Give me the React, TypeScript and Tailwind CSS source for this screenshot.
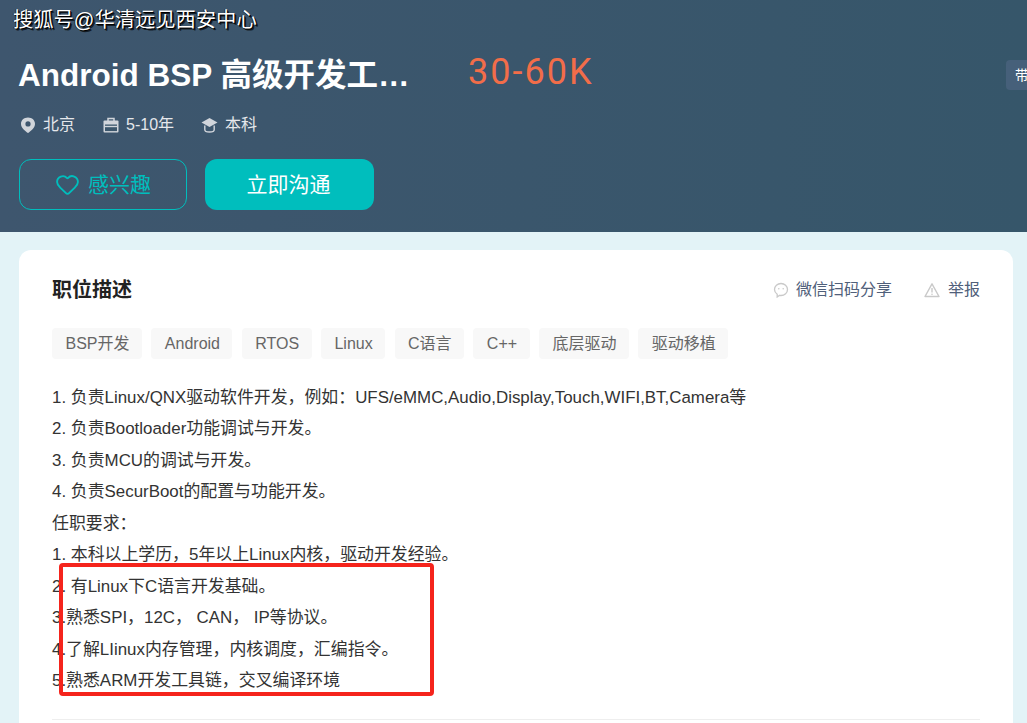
import React from 'react';
import { Heart } from 'lucide-react';

const tags = ['BSP开发', 'Android', 'RTOS', 'Linux', 'C语言', 'C++', '底层驱动', '驱动移植'];

const lines = [
  '1. 负责Linux/QNX驱动软件开发，例如：UFS/eMMC,Audio,Display,Touch,WIFI,BT,Camera等',
  '2. 负责Bootloader功能调试与开发。',
  '3. 负责MCU的调试与开发。',
  '4. 负责SecurBoot的配置与功能开发。',
  '任职要求：',
  '1. 本科以上学历，5年以上Linux内核，驱动开发经验。',
  '2. 有Linux下C语言开发基础。',
  '3.熟悉SPI，12C， CAN， IP等协议。',
  '4.了解LIinux内存管理，内核调度，汇编指令。',
  '5.熟悉ARM开发工具链，交叉编译环境',
];

const PinIcon = () => (
  <svg width="16" height="16" viewBox="0 0 16 16" fill="none">
    <path fillRule="evenodd" clipRule="evenodd" d="M8 0.500C3.900 0.500 1 3.300 1 6.900 1 10.900 5.800 14.500 8 16c2.200-1.500 7-5.100 7-9.100C15 3.300 12.100 0.500 8 0.500Zm0 9a2.600 2.600 0 1 1 0-5.200 2.600 2.600 0 0 1 0 5.200Z" fill="#d1d5db" />
  </svg>
);

const CaseIcon = () => (
  <svg width="16" height="16" viewBox="0 0 16 16" fill="none">
    <path d="M5 4V1.500h6V4" stroke="#d1d5db" strokeWidth="1.500" />
    <rect x="0.500" y="3.500" width="15" height="12" rx="1" fill="#d1d5db" />
    <rect x="2" y="7.500" width="12" height="1.300" fill="#3b566c" />
    <rect x="2" y="10.200" width="12" height="3.900" fill="#3b566c" />
  </svg>
);

const CapIcon = () => (
  <svg width="17" height="16" viewBox="0 0 17 16" fill="none">
    <path d="M8.500 1 0.500 5.500l8 4.500 8-4.500-8-4.500Z" fill="#d1d5db" />
    <path d="M3.800 8.500v4.300c0 1.300 2 2.200 4.700 2.200s4.700-.9 4.700-2.200V8.500" stroke="#d1d5db" strokeWidth="1.400" />
  </svg>
);

const ChatIcon = () => (
  <svg width="16" height="16" viewBox="0 0 16 16" fill="none">
    <path d="M8 1.500c3.600 0 6.500 2.600 6.500 6s-2.900 6-6.500 6c-.5 0-1-.1-1.400-.2L4.200 15v-2.800C2.500 11.100 1.500 9.400 1.500 7.500c0-3.400 2.900-6 6.500-6Z" stroke="#c9c9c9" strokeWidth="1.300" />
    <circle cx="5.800" cy="6.800" r=".8" fill="#c9c9c9" />
    <circle cx="10.200" cy="6.800" r=".8" fill="#c9c9c9" />
  </svg>
);

const WarnIcon = () => (
  <svg width="16" height="16" viewBox="0 0 16 16" fill="none">
    <path d="M8 1.800 1 14.500h14L8 1.800Z" stroke="#c9c9c9" strokeWidth="1.400" strokeLinejoin="round" />
    <path d="M8 6v4.500" stroke="#c9c9c9" strokeWidth="1.400" />
    <circle cx="8" cy="12.300" r=".8" fill="#c9c9c9" />
  </svg>
);

const App: React.FC = () => {
  return (
    <div className="relative h-[723px] w-[1027px] overflow-hidden bg-[#e3f3f7] font-['Liberation_Sans','Noto_Sans_CJK_SC',sans-serif]">
      <header className="h-[232px] bg-gradient-to-r from-[#3e566e] to-[#36566a]">
        <div className="pl-[13px] pt-[8px] text-[20.3px] leading-[24px] text-white [text-shadow:1px_1px_0_#000,2px_2px_0_#000a,-1px_0_0_#0008]">
          搜狐号@华清远见西安中心
        </div>
        <div className="flex items-center pl-[18px] pt-[19px]">
          <h1 className="w-[395px] truncate text-[31.5px] font-bold leading-[48px] text-white">
            Android BSP 高级开发工程师
          </h1>
          <span className="ml-[55px] -translate-y-[3px] font-['Roboto',sans-serif] text-[36px] leading-[48px] tracking-[2px] text-[#f26d49]">
            30-60K
          </span>
          <span className="ml-auto flex h-[30px] w-[21px] items-center overflow-hidden whitespace-nowrap rounded-l bg-[#46607a] pl-[9px] text-[14px] text-white">
            带薪
          </span>
        </div>
        <div className="mt-[14px] flex items-center pl-[20px] text-[16px] leading-[24px] text-[#e5e7eb]">
          <PinIcon />
          <span className="ml-[7px]">北京</span>
          <span className="ml-[28px]"><CaseIcon /></span>
          <span className="ml-[7px]">5-10年</span>
          <span className="ml-[27px]"><CapIcon /></span>
          <span className="ml-[7px]">本科</span>
        </div>
        <div className="mt-[22px] flex gap-[18px] pl-[19px]">
          <button className="flex h-[51px] w-[168px] items-center justify-center gap-[8px] rounded-[12px] border border-[#00bebd] text-[21px] text-[#00bebd]">
            <Heart size={25} strokeWidth={1.8} />
            感兴趣
          </button>
          <button className="h-[51px] w-[169px] rounded-[12px] bg-[#00bebd] pr-[2px] text-[21px] text-white">
            立即沟通
          </button>
        </div>
      </header>

      <main className="ml-[19px] mr-[14px] mt-[18px] rounded-t-[12px] bg-white px-[33px] pb-[40px] pt-[25px]">
        <div className="flex items-center justify-between">
          <h2 className="text-[20px] font-bold leading-[30px] text-[#222]">职位描述</h2>
          <div className="flex items-center text-[16px] text-[#50607a]">
            <ChatIcon />
            <span className="ml-[7px]">微信扫码分享</span>
            <span className="ml-[32px]"><WarnIcon /></span>
            <span className="ml-[8px]">举报</span>
          </div>
        </div>
        <div className="mt-[23px] flex gap-[9.3px]">
          {tags.map((tag) => (
            <span key={tag} className="flex h-[31px] items-center rounded bg-[#f8f8f8] pl-[13.5px] pr-[12.5px] text-[16px] text-[#666]">
              {tag}
            </span>
          ))}
        </div>
        <div className="mt-[23px] border-b border-[#eee] pb-[23px] text-[16.9px] leading-[31.44px] text-[#333]">
          {lines.map((line) => (
            <p key={line} className="whitespace-pre">{line}</p>
          ))}
        </div>
      </main>

      <div className="absolute left-[59px] top-[563px] h-[133px] w-[375px] rounded-[4px] border-[4px] border-[#f5241c]" />
    </div>
  );
};

export default App;
